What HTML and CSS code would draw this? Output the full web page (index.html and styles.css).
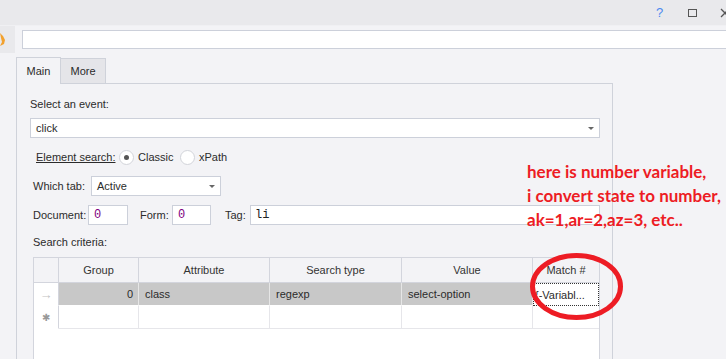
FILE: index.html
```html
<!DOCTYPE html>
<html lang="en">
<head>
  <meta charset="UTF-8" />
  <title>Event - Element search</title>
  <link rel="stylesheet" href="styles.css">
</head>
<body>
  <div class="titlebar">
    <span class="tb-help">?</span>
    <span class="tb-max"></span>
    <svg class="tb-close" width="10" height="10" viewBox="0 0 10 10">
      <path d="M1 1 L9 9 M9 1 L1 9" stroke="#555" stroke-width="1.3" fill="none"/>
    </svg>
  </div>

  <div class="toolbar">
    <div class="tool-strip">
      <svg width="15" height="27" viewBox="0 0 15 27">
        <path d="M0 7 L3 10 L5 14 L4 18 L0 20 L2 16 L1 12 Z" fill="#f2a12e"/>
      </svg>
    </div>
    <div class="url-box"></div>
  </div>

  <div class="tabs">
    <div class="tab active">Main</div>
    <div class="tab">More</div>
  </div>

  <div class="panel">
    <div class="label first">Select an event:</div>
    <div class="combo event"><span>click</span><i class="arrow"></i></div>

    <div class="row search-mode">
      <span class="link-label">Element search:</span>
      <span class="radio checked"><span class="dot"></span>Classic</span>
      <span class="radio"><span class="dot"></span>xPath</span>
    </div>

    <div class="row">
      <span class="tab-label">Which tab:</span>
      <div class="combo small"><span>Active</span><i class="arrow"></i></div>
    </div>

    <div class="row fields">
      <span class="doc-label">Document:</span>
      <div class="field num doc">0</div>
      <span class="form-label">Form:</span>
      <div class="field num form">0</div>
      <span class="tag-label">Tag:</span>
      <div class="field tag">li</div>
    </div>

    <div class="label criteria">Search criteria:</div>

    <div class="grid">
      <div class="grid-row head">
        <div class="cell ind"></div>
        <div class="cell c-group">Group</div>
        <div class="cell c-attr">Attribute</div>
        <div class="cell c-type">Search type</div>
        <div class="cell c-value">Value</div>
        <div class="cell c-match">Match #</div>
      </div>
      <div class="grid-row current">
        <div class="cell ind arrow-ind">&rarr;</div>
        <div class="cell c-group num-cell">0</div>
        <div class="cell c-attr">class</div>
        <div class="cell c-type">regexp</div>
        <div class="cell c-value">select-option</div>
        <div class="cell c-match editing">{-Variabl...</div>
      </div>
      <div class="grid-row new">
        <div class="cell ind star">&#10033;</div>
        <div class="cell c-group"></div>
        <div class="cell c-attr"></div>
        <div class="cell c-type"></div>
        <div class="cell c-value"></div>
        <div class="cell c-match"></div>
      </div>
    </div>
  </div>

  <!-- annotation drawn over the screenshot -->
  <div class="note">
    here is number variable,<br>
    i convert state to number,<br>
    ak=1,ar=2,az=3, etc..
  </div>
  <svg class="ring" width="106" height="80" viewBox="0 0 106 80">
    <ellipse cx="52.5" cy="39.5" rx="44" ry="31" fill="none" stroke="#ed1c24" stroke-width="5"/>
  </svg>
</body>
</html>
```

FILE: styles.css
```css
* {
  box-sizing: border-box;
}

body {
  margin: 0;
  height: 359px;
  overflow: hidden;
  position: relative;
  background: #f3f3f6;
  font-family: "Liberation Sans", Arial, sans-serif;
  font-size: 11px;
  color: #2b2b2b;
}

/* Window title bar */
.titlebar {
  height: 26px;
  background: #e9e9ec;
  border-bottom: 1px solid #f0f0f3;
  display: flex;
  align-items: center;
  justify-content: flex-end;
}

.tb-help {
  width: 8px;
  margin-right: 24px;
  color: #4d8af0;
  font-size: 13px;
  line-height: 13px;
}

.tb-max {
  width: 9px;
  height: 8px;
  border: 1px solid #555;
  margin-right: 23px;
}

.tb-close {
  margin-right: -4px;
}

/* URL toolbar */
.toolbar {
  height: 27px;
  display: flex;
  align-items: center;
}

.tool-strip {
  width: 15px;
  height: 27px;
  background: #e9e9ec;
}

.tool-strip svg {
  display: block;
}

.url-box {
  flex: 1;
  height: 19px;
  margin-left: 7px;
  margin-right: -2px;
  background: #fff;
  border: 1px solid #ccd0da;
}

/* Tabs */
.tabs {
  display: flex;
  align-items: flex-end;
  margin: 4px 0 0 16px;
  height: 26px;
}

.tab {
  width: 45px;
  height: 25px;
  line-height: 24px;
  text-align: center;
  background: #e5e5e9;
  border: 1px solid #cfd2da;
  border-left: none;
  border-bottom: none;
}

.tab.active {
  height: 27px;
  line-height: 27px;
  margin-bottom: -1px;
  position: relative;
  z-index: 1;
  background: #f3f3f6;
  border-left: 1px solid #cfd2da;
}

.panel {
  margin-left: 16px;
  width: 597px;
  height: 280px;
  border: 1px solid #cfd2da;
  border-bottom: none;
  padding: 0 12px 0 13px;
}

.label {
  line-height: 14px;
  margin-top: 10px;
  padding-left: 3px;
}

.label.first {
  margin-top: 13px;
  padding-left: 0;
}

.combo {
  height: 20px;
  background: #fff;
  border: 1px solid #ccd0da;
  display: flex;
  align-items: center;
  justify-content: space-between;
  padding: 0 5px;
}

.combo.event {
  margin-top: 7px;
}

.combo.small {
  width: 130px;
}

.arrow {
  width: 0;
  height: 0;
  border-left: 3px solid transparent;
  border-right: 3px solid transparent;
  border-top: 3px solid #666;
  margin-top: 1px;
}

.row {
  height: 20px;
  margin-top: 9px;
  display: flex;
  align-items: center;
  padding-left: 3px;
}

/* Element search radios */
.search-mode {
  padding-left: 6px;
}

.link-label {
  width: 83px;
  text-decoration: underline;
}

.radio {
  display: flex;
  align-items: center;
  width: 61px;
}

.dot {
  width: 15px;
  height: 15px;
  border-radius: 50%;
  background: #fff;
  border: 1px solid #d2d4da;
  margin-right: 4px;
  position: relative;
}

.radio.checked .dot::after {
  content: "";
  position: absolute;
  left: 4px;
  top: 4px;
  width: 5px;
  height: 5px;
  border-radius: 50%;
  background: #555;
}

.tab-label {
  width: 58px;
}

/* Document / Form / Tag */
.doc-label {
  width: 55px;
}

.form-label {
  width: 32px;
  margin-left: 12px;
}

.tag-label {
  width: 25px;
  margin-left: 14px;
}

.field {
  height: 20px;
  background: #fff;
  border: 1px solid #ccd0da;
  font-family: "Liberation Mono", "Courier New", monospace;
  font-size: 12px;
  line-height: 19px;
  padding-left: 5px;
}

.field.doc {
  width: 40px;
}

.field.form {
  width: 39px;
}

.field.num {
  color: #800080;
}

.field.tag {
  flex: 1;
  padding-left: 4px;
  color: #222;
}

.label.criteria {
  margin-top: 10px;
}

/* Search criteria grid */
.grid {
  margin: 8px 0 0 3px;
  width: 567px;
  height: 110px;
  background: #fff;
  border: 1px solid #d3d5dd;
  border-bottom: none;
}

.grid-row {
  display: flex;
  height: 23px;
}

.grid-row.head {
  height: 25px;
  background: #f3f3f6;
}

.cell {
  height: 100%;
  display: flex;
  align-items: center;
  padding: 0 6px;
  border-right: 1px solid #e6e6ea;
  border-bottom: 1px solid #e6e6ea;
  white-space: nowrap;
  overflow: hidden;
}

.head .cell {
  justify-content: center;
  border-color: #d3d5dd;
  color: #333;
}

.cell.ind {
  width: 25px;
  justify-content: center;
  padding: 0;
  color: #c4c4c4;
  border-bottom-color: #fff;
  border-right-color: #d3d5dd;
}

.head .cell.ind {
  border-bottom-color: #d3d5dd;
}

.cell.arrow-ind {
  font-size: 13px;
}

.cell.star {
  font-size: 10px;
  color: #999;
}

.c-group {
  width: 80px;
}

.c-attr {
  width: 131px;
}

.c-type {
  width: 132px;
}

.c-value {
  width: 131px;
}

.c-match {
  width: 66px;
  border-right: none;
}

.current .cell {
  background: #c8c8c8;
  border-right-color: #e6e6e6;
  border-bottom-color: #fff;
}

.current .cell.ind {
  background: #fff;
  border-right-color: #d3d5dd;
}

.num-cell {
  justify-content: flex-end;
  padding-right: 5px;
}

.current .cell.editing {
  background: #fff;
  border: 1px dotted #333;
  padding-left: 1px;
}

/* Annotation */
.note {
  position: absolute;
  left: 527px;
  top: 160px;
  font-family: Lato, "Open Sans", sans-serif;
  font-weight: bold;
  font-size: 17px;
  line-height: 24px;
  color: #ed1c24;
  white-space: nowrap;
}

.ring {
  position: absolute;
  left: 524px;
  top: 247px;
}
```
